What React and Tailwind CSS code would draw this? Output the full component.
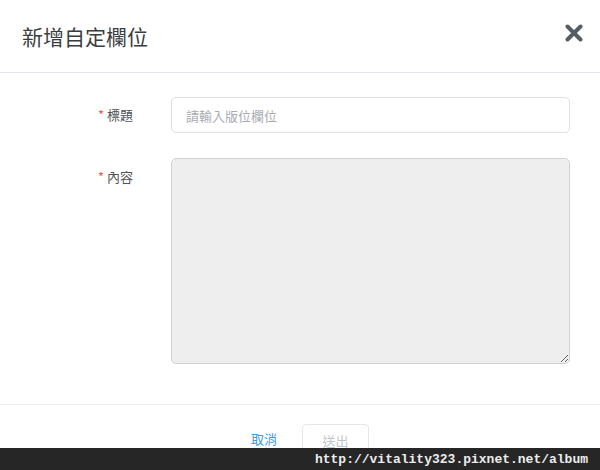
export default function App() {
  return (
    <div className="relative w-[600px] h-[470px] overflow-hidden bg-white font-['Noto_Sans_CJK_TC','Noto_Sans',sans-serif]">
      {/* header */}
      <div className="h-[73px] flex items-center justify-between pl-[22px] pr-[17px] border-b border-[#e4e7ef]">
        <div className="text-[21px] text-[#3a3d41] leading-none">新增自定欄位</div>
        <svg width="18" height="18" viewBox="0 0 18 18" className="mt-[-6px]">
          <path d="M2.5 2.5 L15.5 15.5 M15.5 2.5 L2.5 15.5" stroke="#575d65" strokeWidth="4" strokeLinecap="round" />
        </svg>
      </div>

      {/* body */}
      <div className="pt-[24px] pb-[40px] pr-[30px] flex flex-col gap-[25px] border-b border-[#eceef2]">
        <div className="flex items-start">
          <div className="w-[171px] pr-[38px] text-right text-[13px] text-[#505357] leading-[36px]">
            <span className="text-[#f05a47] mr-[3px]">*</span>標題
          </div>
          <input
            className="flex-1 h-[36px] rounded-[5px] border border-[#dcdfe6] px-[14px] text-[13px] text-[#333] placeholder-[#a8abb2] outline-none"
            placeholder="請輸入版位欄位"
          />
        </div>
        <div className="flex items-start">
          <div className="w-[171px] pr-[38px] text-right text-[13px] text-[#505357] leading-[38px]">
            <span className="text-[#f05a47] mr-[3px]">*</span>內容
          </div>
          <textarea
            disabled
            className="flex-1 h-[206px] rounded-[5px] border border-[#d2d2d2] bg-[#eeeeee] outline-none"
          />
        </div>
      </div>

      {/* footer */}
      <div className="pt-[19px] flex justify-center items-start gap-[5px]">
        <button className="h-[30px] px-[20px] text-[13px] leading-[30px] text-[#3d9be0]">取消</button>
        <button className="h-[33px] w-[67px] rounded-[4px] border border-[#e4e7ed] text-[13px] leading-[28px] text-[#c0c4cc]">送出</button>
      </div>

      {/* watermark */}
      <div className="absolute left-0 right-0 bottom-0 h-[22px] bg-[#262626] flex items-center justify-end pr-[12px]">
        <span className="font-['Liberation_Mono',monospace] font-bold text-[13px] text-[#ececec] leading-none">http://vitality323.pixnet.net/album</span>
      </div>
    </div>
  )
}
